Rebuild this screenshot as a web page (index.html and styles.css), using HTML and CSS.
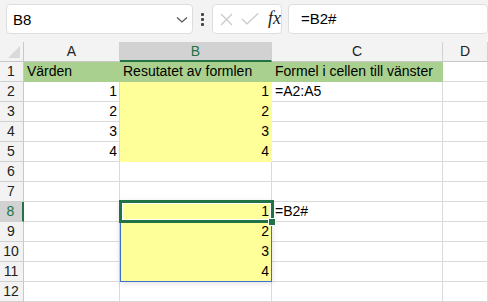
FILE: index.html
```html
<!DOCTYPE html>
<html>
<head>
<meta charset="utf-8">
<link rel="stylesheet" href="styles.css">
</head>
<body>
<div class="topbar">
  <div class="namebox">
    <span class="name">B8</span>
    <svg class="chev" width="12" height="8" viewBox="0 0 12 8"><path d="M1 1.5 L6 6 L11 1.5" fill="none" stroke="#555" stroke-width="1.2"/></svg>
  </div>
  <div class="dots"><i></i><i></i><i></i></div>
  <div class="fbtns">
    <svg width="13" height="13" viewBox="0 0 13 13"><path d="M1 1 L12 12 M12 1 L1 12" stroke="#c8c8c8" stroke-width="1.2"/></svg>
    <svg width="18" height="14" viewBox="0 0 18 14"><path d="M1 7 L6 12 L17 1.5" fill="none" stroke="#c8c8c8" stroke-width="1.2"/></svg>
    <span class="fx">fx</span>
  </div>
  <div class="formula">=B2#</div>
</div>
<div class="sheet">
  <div class="corner"></div>
  <div class="ch">A</div>
  <div class="ch sel">B</div>
  <div class="ch">C</div>
  <div class="ch">D</div>

  <div class="rh">1</div>
  <div class="c g">Värden</div>
  <div class="c g">Resutatet av formlen</div>
  <div class="c g">Formel i cellen till vänster</div>
  <div class="c"></div>

  <div class="rh">2</div>
  <div class="c n">1</div>
  <div class="c y n">1</div>
  <div class="c">=A2:A5</div>
  <div class="c"></div>

  <div class="rh">3</div>
  <div class="c n">2</div>
  <div class="c y n">2</div>
  <div class="c"></div>
  <div class="c"></div>

  <div class="rh">4</div>
  <div class="c n">3</div>
  <div class="c y n">3</div>
  <div class="c"></div>
  <div class="c"></div>

  <div class="rh">5</div>
  <div class="c n">4</div>
  <div class="c y n">4</div>
  <div class="c"></div>
  <div class="c"></div>

  <div class="rh">6</div>
  <div class="c"></div>
  <div class="c"></div>
  <div class="c"></div>
  <div class="c"></div>

  <div class="rh">7</div>
  <div class="c"></div>
  <div class="c"></div>
  <div class="c"></div>
  <div class="c"></div>

  <div class="rh sel">8</div>
  <div class="c"></div>
  <div class="c y n">1</div>
  <div class="c">=B2#</div>
  <div class="c"></div>

  <div class="rh">9</div>
  <div class="c"></div>
  <div class="c y n">2</div>
  <div class="c"></div>
  <div class="c"></div>

  <div class="rh">10</div>
  <div class="c"></div>
  <div class="c y n">3</div>
  <div class="c"></div>
  <div class="c"></div>

  <div class="rh">11</div>
  <div class="c"></div>
  <div class="c y n">4</div>
  <div class="c"></div>
  <div class="c"></div>

  <div class="rh">12</div>
  <div class="c"></div>
  <div class="c"></div>
  <div class="c"></div>
  <div class="c"></div>

  <div class="spill"></div>
  <div class="selection"></div>
  <div class="handle"></div>
</div>
</body>
</html>
```

FILE: styles.css
```css
* { box-sizing: border-box; }
html, body { margin: 0; padding: 0; }
body {
  width: 488px;
  height: 302px;
  overflow: hidden;
  background: #ffffff;
  font-family: "Liberation Sans", Arial, sans-serif;
  color: #000;
}
.topbar {
  height: 42px;
  background: #f3f3f3;
  display: flex;
  align-items: flex-start;
  padding: 4px 0 0 6px;
  overflow: hidden;
}
.namebox {
  width: 202px;
  height: 30px;
  background: #fff;
  border: 1px solid #dedede;
  border-radius: 4px;
  display: flex;
  align-items: center;
  justify-content: space-between;
  padding: 0 4px 0 6px;
}
.name { font-size: 15px; color: #000; }
.chev { margin-top: 2px; }
.dots {
  width: 21px;
  height: 30px;
  display: flex;
  flex-direction: column;
  align-items: center;
  justify-content: center;
  gap: 2px;
}
.dots i {
  display: block;
  width: 3px;
  height: 3px;
  background: #444;
  border-radius: 1px;
}
.fbtns {
  width: 73px;
  height: 30px;
  background: #fff;
  border: 1px solid #dedede;
  border-radius: 4px;
  display: flex;
  align-items: center;
  padding: 0 0 0 7px;
  gap: 8px;
}
.fx {
  font-family: "Liberation Serif", "Times New Roman", serif;
  font-style: italic;
  font-size: 18px;
  color: #222;
  margin-left: 1px;
  margin-top: -2px;
}
.formula {
  margin-left: 6px;
  flex: 0 0 200px;
  height: 30px;
  background: #fff;
  border: 1px solid #dedede;
  border-radius: 4px;
  font-size: 15px;
  line-height: 28px;
  padding-left: 12px;
}
.sheet {
  position: relative;
  display: grid;
  grid-template-columns: 24px 96px 152px 171px 1fr;
  grid-auto-rows: 20px;
  font-size: 14px;
}
.corner {
  background: #f3f3f3;
  border-right: 1px solid #c8c8c8;
  border-bottom: 1px solid #c8c8c8;
  position: relative;
}
.corner::after {
  content: "";
  position: absolute;
  right: 3px;
  bottom: 3px;
  width: 0;
  height: 0;
  border-left: 12px solid transparent;
  border-bottom: 12px solid #dadada;
}
.ch {
  background: #f3f3f3;
  border-right: 1px solid #d0d0d0;
  border-bottom: 1px solid #c8c8c8;
  text-align: center;
  line-height: 19px;
  color: #222;
}
.ch.sel {
  background: #d2d2d2;
  color: #217346;
  border-bottom: 2px solid #217346;
}
.rh {
  background: #f3f3f3;
  border-right: 1px solid #c8c8c8;
  border-bottom: 1px solid #d0d0d0;
  text-align: center;
  line-height: 19px;
  color: #222;
  padding-right: 1px;
}
.rh.sel {
  background: #d2d2d2;
  color: #217346;
  border-right: 2px solid #217346;
}
.c {
  border-right: 1px solid #dadada;
  border-bottom: 1px solid #dadada;
  line-height: 19px;
  padding: 0 2px 0 3px;
  white-space: nowrap;
  overflow: visible;
}
.c.n { text-align: right; }
.c.g {
  background: #a9d08e;
  border-color: #a9d08e;
}
.c.y {
  background: #ffff99;
  border-color: #ffff99;
}
.spill {
  position: absolute;
  left: 120px;
  top: 159px;
  width: 152px;
  height: 81px;
  border: 1px solid #3b6fd1;
  box-shadow: 0 1px 6px rgba(0,0,0,0.14);
  pointer-events: none;
}
.selection {
  position: absolute;
  left: 119px;
  top: 158px;
  width: 155px;
  height: 23px;
  border: 3px solid #217346;
  box-shadow: inset 0 0 0 1px #ffffff;
}
.handle {
  position: absolute;
  left: 268px;
  top: 176px;
  width: 8px;
  height: 8px;
  background: #217346;
  border: 1px solid #ffffff;
}
```
